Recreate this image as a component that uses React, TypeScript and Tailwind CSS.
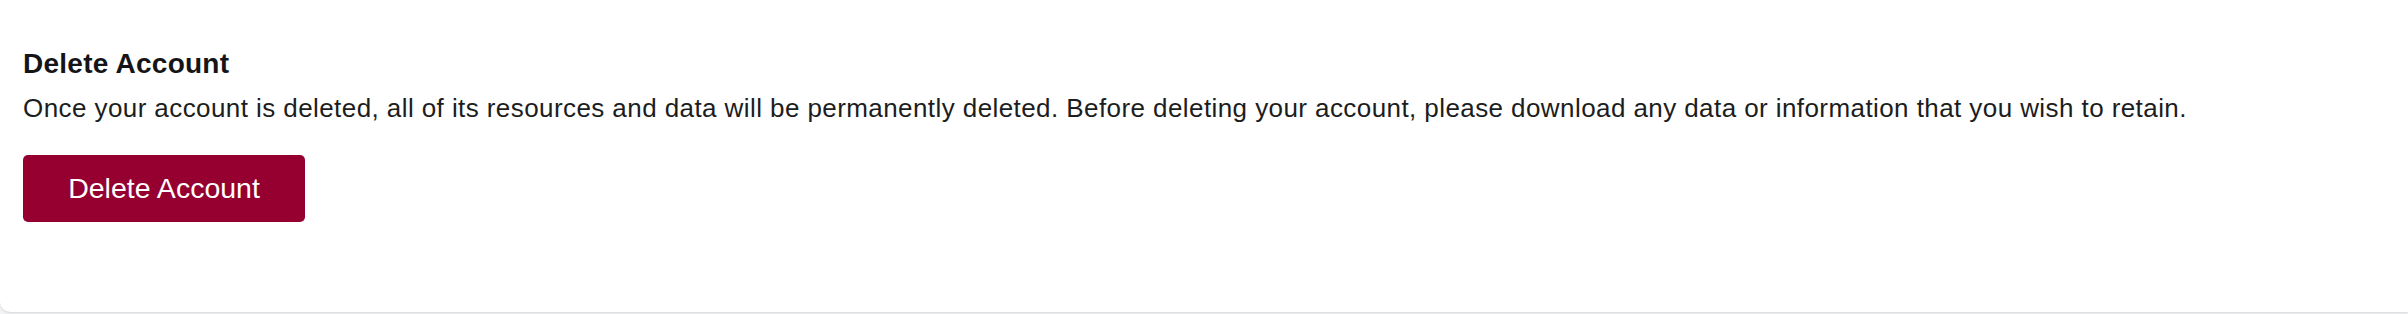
export default function App() {
  return (
    <div className="w-[2408px] h-[314px] bg-[#f3f4f6] overflow-hidden" style={{ fontFamily: '"Liberation Sans", Arial, sans-serif' }}>
      <div className="w-full h-[312px] bg-white rounded-bl-[10px] shadow-[0_1px_3px_0_rgba(0,0,0,0.1),0_1px_2px_-1px_rgba(0,0,0,0.1)] pt-[50px] pl-[23px]">
        <h2 className="text-[28px] leading-[28px] font-bold tracking-[0.25px] text-[#151518]">Delete Account</h2>
        <p className="mt-[17px] text-[26px] leading-[26px] tracking-[0.42px] text-[#1c1d20]">
          Once your account is deleted, all of its resources and data will be permanently deleted. Before deleting your account, please download any data or information that you wish to retain.
        </p>
        <button className="mt-[34px] w-[282px] h-[67px] rounded-[5px] bg-[#960031] text-white text-[28.5px] leading-none flex items-center justify-center">
          Delete Account
        </button>
      </div>
    </div>
  );
}
